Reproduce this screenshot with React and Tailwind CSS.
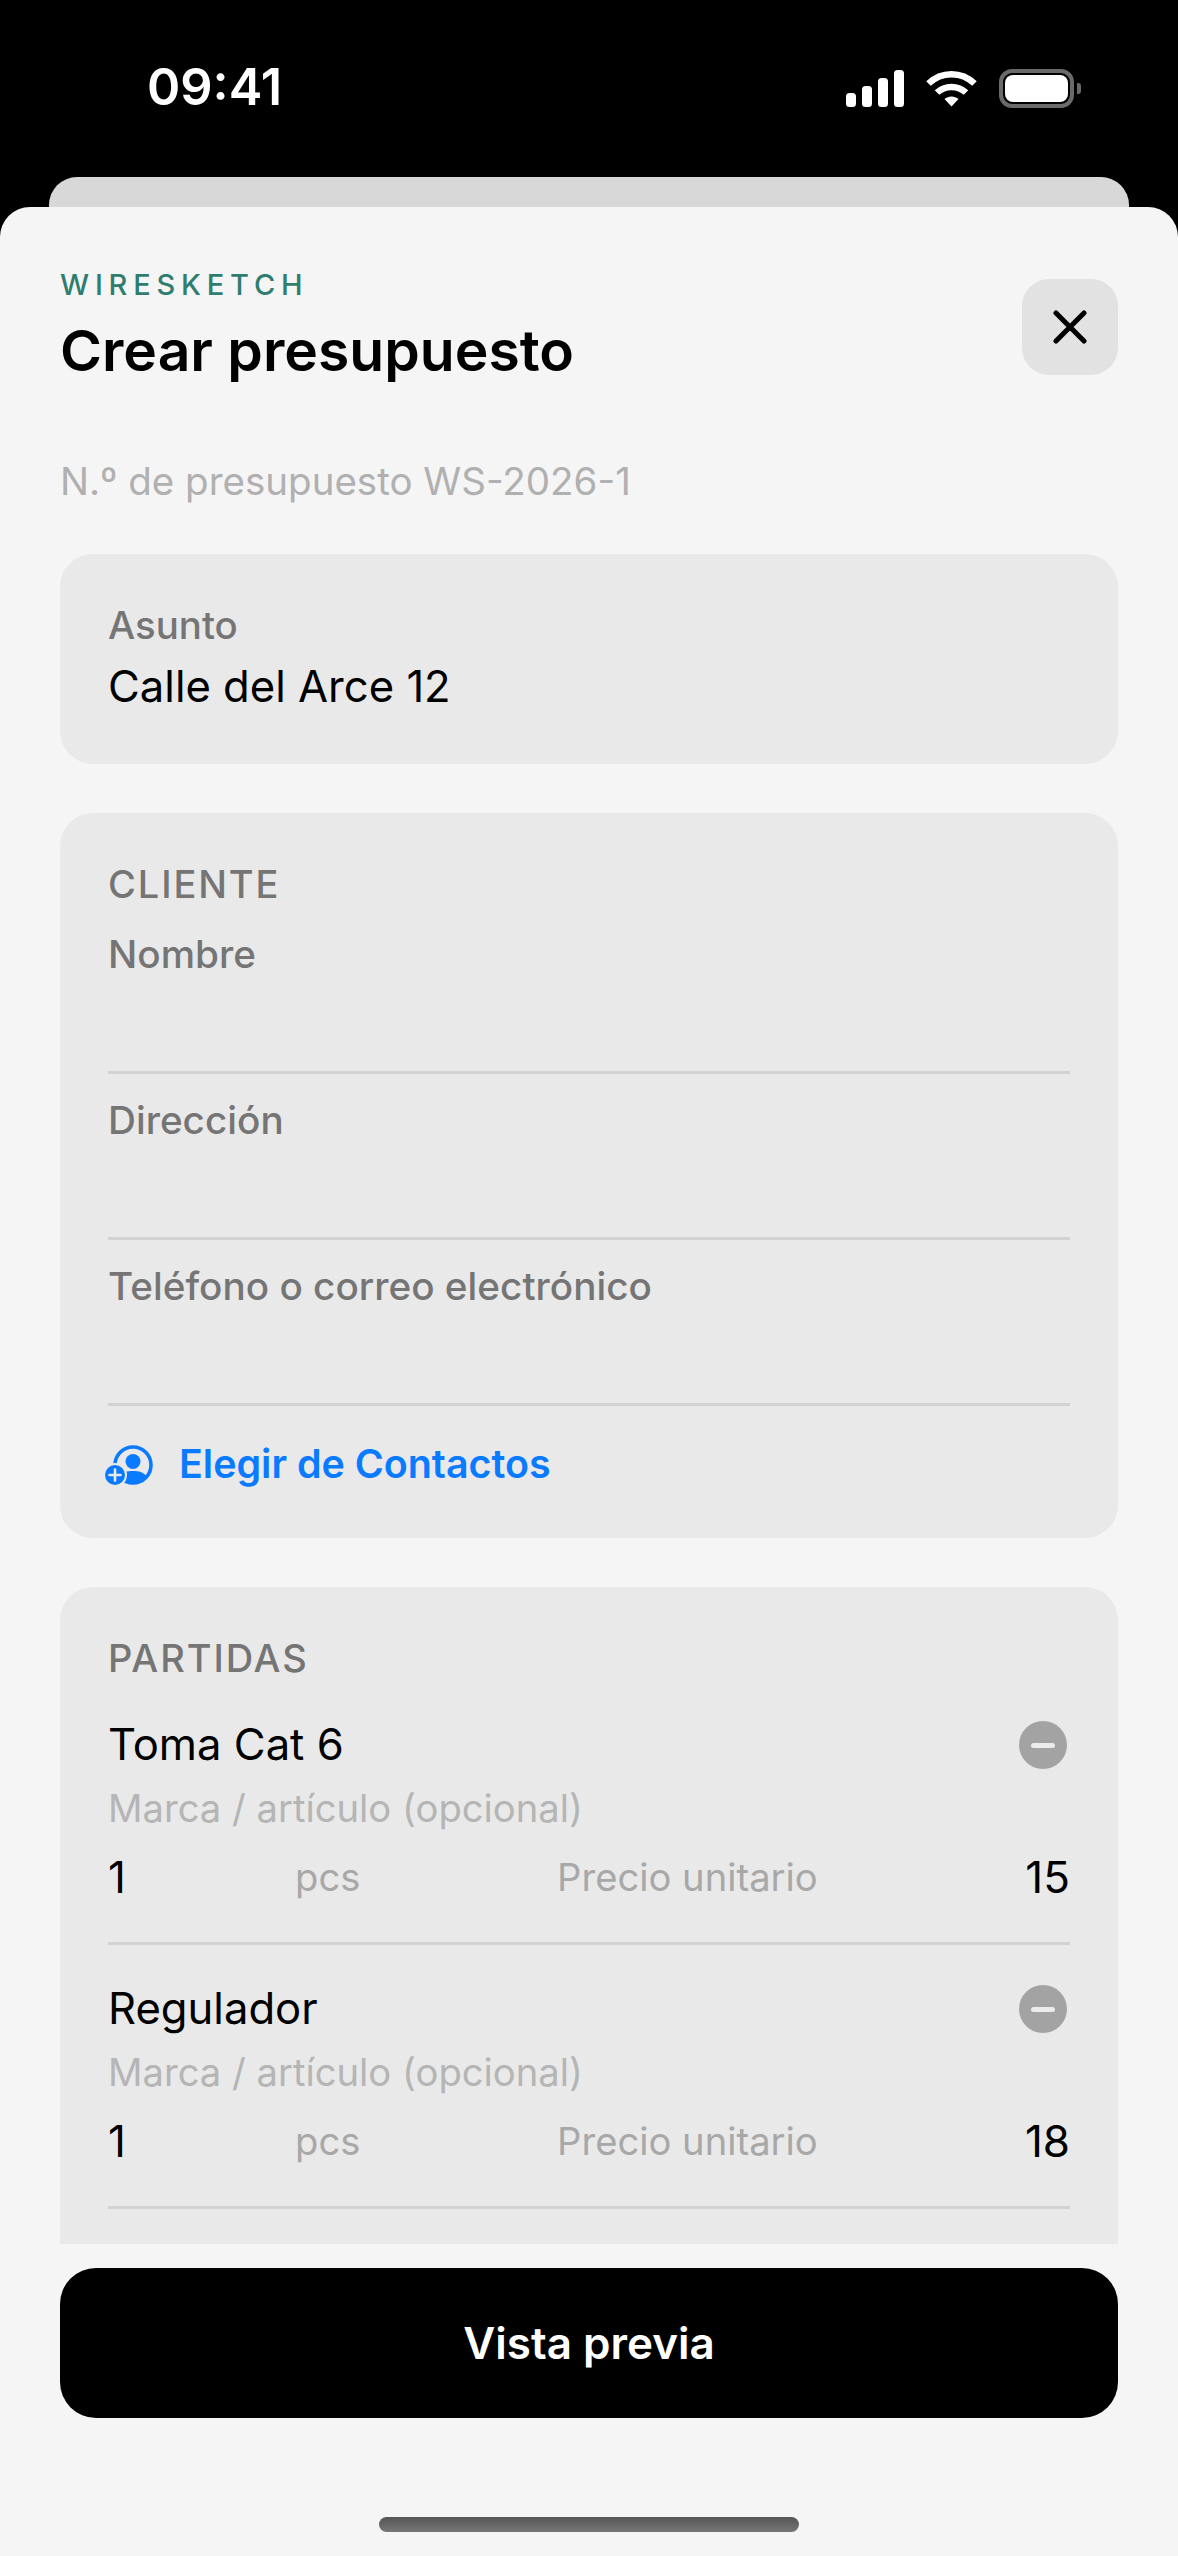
const font = { fontFamily: 'Inter, sans-serif' };

const StatusIcons = () => (
  <div className="flex items-center">
    <svg width="58" height="37" viewBox="0 0 58 37" fill="#fff">
      <rect x="0" y="23" width="10" height="14" rx="3.5" />
      <rect x="16" y="16" width="10" height="21" rx="3.5" />
      <rect x="32" y="8" width="10" height="29" rx="3.5" />
      <rect x="48" y="0" width="10" height="37" rx="3.5" />
    </svg>
    <svg className="ml-[22px]" width="51" height="37" viewBox="0 0 51 37" fill="none" stroke="#fff" strokeWidth="6.5">
      <path d="M2.5 13.5C15.5 1 35.5 1 48.5 13.5" />
      <path d="M11 22.5C19 15 32 15 40 22.5" />
      <path d="M18.5 29L25.5 36.5L32.5 29C28.5 25.5 22.5 25.5 18.5 29Z" fill="#fff" stroke="none" />
    </svg>
    <div className="ml-[22px] flex items-center">
      <div className="flex h-[39px] w-[75px] items-center justify-center rounded-[13px] border-[4px] border-[#6a6a6a]">
        <div className="h-[27px] w-[63px] rounded-[8px] bg-white" />
      </div>
      <div className="ml-[3px] h-[11px] w-[4px] rounded-r-[3px] bg-[#6a6a6a]" />
    </div>
  </div>
);

const ContactIcon = () => (
  <svg width="50" height="42" viewBox="0 0 50 42" className="shrink-0">
    <circle cx="29" cy="21" r="18" fill="none" stroke="#0a7aff" strokeWidth="3.6" />
    <circle cx="29" cy="17.5" r="7.5" fill="#0a7aff" />
    <path d="M15 33C18 28 23 27 29 27C35 27 40 28 43 33C39 38 34 40 29 40C24 40 19 38 15 33Z" fill="#0a7aff" />
    <circle cx="11" cy="31" r="12" fill="#e9e9e9" />
    <circle cx="11" cy="31" r="10" fill="#0a7aff" />
    <path d="M11 25.5V36.5M5.5 31H16.5" stroke="#e9e9e9" strokeWidth="2.6" strokeLinecap="round" />
  </svg>
);

const Field = ({ label }) => (
  <div className="mb-[24px] border-b-[3px] border-[#d2d2d2] pb-[95px]">
    <div className="text-[38.7px] leading-[44px] font-medium text-[#757575]">{label}</div>
  </div>
);

const LineItem = ({ name, price }) => (
  <div className="border-b-[3px] border-[#d2d2d2] pb-[39px]">
    <div className="flex items-center justify-between">
      <span className="text-[43.6px] leading-[52px] text-black">{name}</span>
      <span className="mr-[3px] flex h-[48px] w-[48px] items-center justify-center rounded-full bg-[#a3a3a3]">
        <span className="h-[5px] w-[24px] rounded-full bg-[#ececec]" />
      </span>
    </div>
    <div className="mt-[15px] text-[38.2px] leading-[44px] text-[#b5b5b5]">Marca / artículo (opcional)</div>
    <div className="mt-[21px] flex items-center text-[44px] leading-[52px]">
      <span className="w-[187px] text-black">1</span>
      <span className="w-[262px] text-[38.2px] text-[#a8a8a8]">pcs</span>
      <span className="flex-1 text-[38.2px] text-[#a8a8a8]">Precio unitario</span>
      <span className="text-black">{price}</span>
    </div>
  </div>
);

export default function App() {
  return (
    <div className="flex h-[2556px] flex-col overflow-hidden bg-black" style={font}>
      <div className="flex h-[177px] shrink-0 items-start justify-between pt-[62px] pr-[97px] pl-[147px]">
        <span className="text-[50.5px] leading-[50px] font-semibold text-white">09:41</span>
        <div className="pt-[7px]"><StatusIcons /></div>
      </div>
      <div className="mx-[49px] h-[30px] shrink-0 rounded-t-[28px] bg-[#d8d8d8]" />
      <div className="flex min-h-0 flex-1 flex-col rounded-t-[30px] bg-[#f5f5f5]">
        <div className="min-h-0 flex-1 overflow-hidden px-[60px] pt-[61px]">
          <div className="flex items-start justify-between">
            <div>
              <div className="text-[29px] leading-[34px] font-medium tracking-[0.2em] text-[#2e7d6f]">WIRESKETCH</div>
              <h1 className="mt-[14px] text-[57px] leading-[70px] font-semibold text-black">Crear presupuesto</h1>
            </div>
            <button className="mt-[11px] flex h-[96px] w-[96px] items-center justify-center rounded-[27px] bg-[#e2e2e2]">
              <svg width="34" height="34" viewBox="0 0 34 34" fill="none" stroke="#000" strokeWidth="5" strokeLinecap="round">
                <path d="M3 3L31 31M31 3L3 31" />
              </svg>
            </button>
          </div>
          <div className="mt-[73px] text-[38.5px] leading-[44px] text-[#b0b0b0]">N.º de presupuesto WS-2026-1</div>

          <div className="mt-[51px] rounded-[33px] bg-[#e9e9e9] px-[48px] pt-[49px] pb-[51px]">
            <div className="text-[38.4px] leading-[44px] font-medium text-[#757575]">Asunto</div>
            <div className="mt-[14px] text-[43.6px] leading-[52px] text-black">Calle del Arce 12</div>
          </div>

          <div className="mt-[49px] rounded-[33px] bg-[#e9e9e9] px-[48px] pt-[49px] pb-[49px]">
            <div className="text-[38px] leading-[44px] font-medium tracking-[0.05em] text-[#757575]">CLIENTE</div>
            <div className="mt-[26px]">
              <Field label="Nombre" />
              <Field label="Dirección" />
              <Field label="Teléfono o correo electrónico" />
            </div>
            <div className="mt-[35px] -ml-[4px] flex h-[48px] items-center">
              <ContactIcon />
              <span className="ml-[25px] text-[39.4px] font-semibold text-[#0a7aff]">Elegir de Contactos</span>
            </div>
          </div>

          <div className="mt-[49px] rounded-t-[33px] bg-[#e9e9e9] px-[48px] pt-[49px] pb-[40px]">
            <div className="text-[38px] leading-[44px] font-medium tracking-[0.05em] text-[#757575]">PARTIDAS</div>
            <div className="mt-[39px] flex flex-col gap-[38px]">
              <LineItem name="Toma Cat 6" price="15" />
              <LineItem name="Regulador" price="18" />
            </div>
          </div>
        </div>
        <div className="shrink-0 px-[60px] pt-[24px]">
          <button className="flex h-[150px] w-full items-center justify-center rounded-[36px] bg-black text-[44px] font-semibold text-white">Vista previa</button>
        </div>
        <div className="mt-[99px] mb-[24px] h-[15px] w-[420px] shrink-0 self-center rounded-full bg-gradient-to-b from-[#555555] to-[#777777]" />
      </div>
    </div>
  );
}
